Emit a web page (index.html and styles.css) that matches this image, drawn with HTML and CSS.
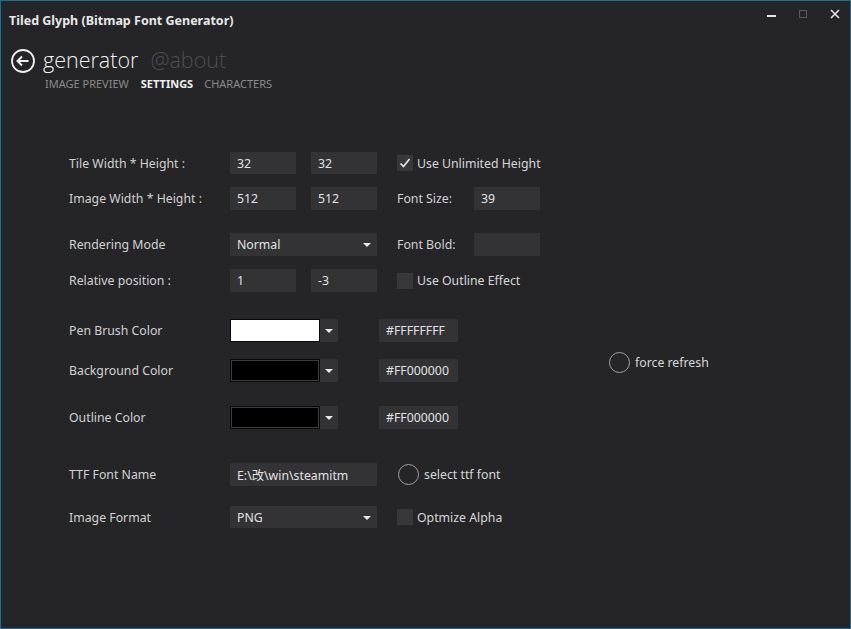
FILE: index.html
```html
<!DOCTYPE html>
<html>
<head>
<meta charset="utf-8">
<link rel="stylesheet" href="styles.css">
</head>
<body>
<div class="window">
  <div class="titlebar">
    <div class="title">Tiled Glyph (Bitmap Font Generator)</div>
    <div class="controls">
      <span class="ctl min"><svg width="10" height="10" viewBox="0 0 10 10"><rect x="0" y="6" width="9" height="2" fill="#e6e6e6"/></svg></span>
      <span class="ctl max"><svg width="10" height="10" viewBox="0 0 10 10"><rect x="1.5" y="1.5" width="7" height="7" fill="none" stroke="#5a5a5c" stroke-width="1"/></svg></span>
      <span class="ctl close"><svg width="10" height="10" viewBox="0 0 10 10"><path d="M1 1 L9 9 M9 1 L1 9" stroke="#e6e6e6" stroke-width="1.6"/></svg></span>
    </div>
  </div>
  <div class="header">
    <svg class="back" width="26" height="26" viewBox="0 0 26 26"><circle cx="13" cy="13" r="11" fill="none" stroke="#eeeeee" stroke-width="1.8"/><path d="M7.5 13 H18.5 M12 8.5 L7.5 13 L12 17.5" fill="none" stroke="#eeeeee" stroke-width="2"/></svg>
    <span class="pagetitle">generator</span>
    <span class="pagealt">@about</span>
  </div>
  <div class="tabs">
    <span class="tab">IMAGE PREVIEW</span>
    <span class="tab active">SETTINGS</span>
    <span class="tab">CHARACTERS</span>
  </div>

  <div class="form">
    <div class="row r1">
      <span class="label">Tile Width * Height :</span>
      <span class="input w66">32</span>
      <span class="input w66 ml15">32</span>
      <span class="check on ml20"><svg width="16" height="16" viewBox="0 0 16 16"><path d="M3.5 8.5 L6.5 11.5 L12.5 4" fill="none" stroke="#e8e8e8" stroke-width="1.7"/></svg></span>
      <span class="ctext">Use Unlimited Height</span>
    </div>
    <div class="row r2">
      <span class="label">Image Width * Height :</span>
      <span class="input w66">512</span>
      <span class="input w66 ml15">512</span>
      <span class="label2 ml20">Font Size:</span>
      <span class="input w66">39</span>
    </div>
    <div class="row r3">
      <span class="label">Rendering Mode</span>
      <span class="select w147">Normal<i class="tri"></i></span>
      <span class="label2 ml20">Font Bold:</span>
      <span class="input w66"></span>
    </div>
    <div class="row r4">
      <span class="label">Relative position :</span>
      <span class="input w66">1</span>
      <span class="input w66 ml15">-3</span>
      <span class="check ml20"></span>
      <span class="ctext">Use Outline Effect</span>
    </div>
    <div class="row r5">
      <span class="label">Pen Brush Color</span>
      <span class="picker"><span class="swatch white"></span><i class="tri"></i></span>
      <span class="input hex">#FFFFFFFF</span>
    </div>
    <div class="row r6">
      <span class="label">Background Color</span>
      <span class="picker"><span class="swatch black"></span><i class="tri"></i></span>
      <span class="input hex">#FF000000</span>
      <span class="radio refresh"><i class="circle"></i>force refresh</span>
    </div>
    <div class="row r7">
      <span class="label">Outline Color</span>
      <span class="picker"><span class="swatch black"></span><i class="tri"></i></span>
      <span class="input hex">#FF000000</span>
    </div>
    <div class="row r8">
      <span class="label">TTF Font Name</span>
      <span class="input w147 clip">E:\改\win\steamitm</span>
      <span class="radio ttf"><i class="circle"></i>select ttf font</span>
    </div>
    <div class="row r9">
      <span class="label">Image Format</span>
      <span class="select w147">PNG<i class="tri"></i></span>
      <span class="check ml20"></span>
      <span class="ctext">Optmize Alpha</span>
    </div>
  </div>
</div>
</body>
</html>
```

FILE: styles.css
```css
* { box-sizing: border-box; }
html, body { margin: 0; padding: 0; }
body {
  width: 851px;
  height: 629px;
  background: #252527;
  font-family: "Noto Sans", "Noto Sans CJK SC", sans-serif;
  color: #d4d4d4;
  overflow: hidden;
}
.window {
  width: 851px;
  height: 629px;
  border: 1px solid #1f6f95;
  background: #252527;
  position: relative;
}
.titlebar {
  height: 38px;
  display: flex;
  align-items: flex-start;
  justify-content: space-between;
}
.title {
  font-weight: bold;
  font-size: 12.5px;
  color: #e8e8e8;
  padding: 11px 0 0 8px;
}
.controls {
  display: flex;
  padding-top: 8px;
  padding-right: 10px;
}
.ctl { display: block; width: 10px; height: 10px; }
.ctl svg { display: block; }
.min { margin-right: 21px; }
.max { margin-right: 22px; }
.header {
  display: flex;
  align-items: center;
  height: 44px;
  padding-left: 9px;
}
.back { display: block; margin-right: 7px; }
.pagetitle {
  font-family: "Open Sans", "Noto Sans", sans-serif;
  font-weight: 300;
  font-size: 21.5px;
  color: #f0f0f0;
  margin-right: 12px;
  line-height: 28px;
  margin-top: -3px;
}
.pagealt {
  font-family: "Open Sans", "Noto Sans", sans-serif;
  font-weight: 300;
  font-size: 21.5px;
  color: #4e4e51;
  line-height: 28px;
  margin-top: -3px;
}
.tabs {
  display: flex;
  padding-left: 44px;
  margin-top: -6px;
  font-size: 11px;
  line-height: 14px;
}
.tab { color: #8a8a8c; margin-right: 12px; }
.tab.active { color: #f0f0f0; font-weight: bold; margin-right: 11px; }

.form {
  padding-left: 68px;
  padding-top: 61px;
}
.row {
  display: flex;
  align-items: center;
  height: 23px;
  font-size: 12.3px;
}
.r1 { height: 22px; }
.r2 { margin-top: 13px; }
.r3 { margin-top: 23px; }
.r4 { margin-top: 13px; }
.r5 { margin-top: 27px; }
.r6 { margin-top: 17px; }
.r7 { margin-top: 24px; }
.r8 { margin-top: 34px; }
.r9 { margin-top: 20px; height: 22px; }
.label { width: 161px; color: #d2d2d2; }
.label2 { width: 77px; color: #d2d2d2; }
.input, .select {
  display: flex;
  align-items: center;
  height: 100%;
  background: #333336;
  color: #e2e2e2;
  padding-left: 7px;
  white-space: nowrap;
}
.w66 { width: 66px; }
.w147 { width: 147px; }
.ml15 { margin-left: 15px; }
.ml20 { margin-left: 20px; }
.clip { overflow: hidden; }
.select { position: relative; }
.tri {
  display: block;
  width: 0; height: 0;
  border-left: 4px solid transparent;
  border-right: 4px solid transparent;
  border-top: 4px solid #e8e8e8;
}
.select .tri { position: absolute; right: 6px; top: 10px; }
.check {
  display: block;
  width: 16px;
  height: 16px;
  background: #38383b;
}
.check svg { display: block; }
.ctext { margin-left: 4px; color: #d8d8d8; }
.picker {
  display: flex;
  align-items: center;
  width: 108px;
  height: 100%;
  background: #333336;
}
.swatch {
  display: block;
  width: 90px;
  height: 23px;
  border: 1px solid #080808;
}
.swatch.white { background: #ffffff; }
.swatch.black { background: #000; box-shadow: inset 0 0 0 1px #3c3c3c, inset 0 0 0 2px #000; }
.picker .tri { margin-left: 5px; }
.hex { width: 79px; margin-left: 41px; }
.radio {
  display: flex;
  align-items: center;
  color: #d8d8d8;
}
.circle {
  display: block;
  width: 21px;
  height: 21px;
  border: 1.5px solid #a0a0a2;
  border-radius: 50%;
  margin-right: 5px;
}
.refresh { margin-left: 151px; margin-top: -16px; }
.ttf { margin-left: 21px; }
```
